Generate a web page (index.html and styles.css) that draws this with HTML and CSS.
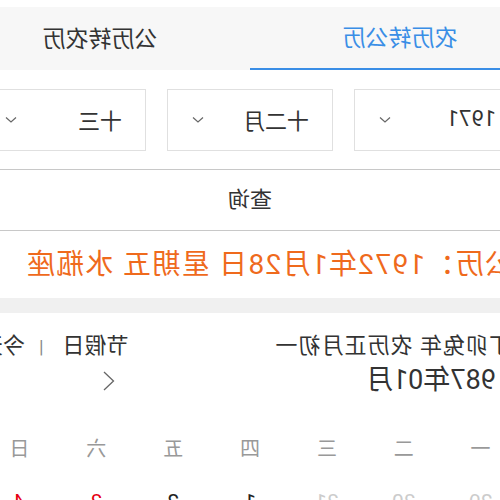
FILE: index.html
```html
<!DOCTYPE html>
<html lang="zh-CN">
<head>
  <meta charset="UTF-8">
  <meta name="viewport" content="width=device-width, initial-scale=1.0">
  <title>农历转公历</title>
  <link rel="stylesheet" href="styles.css">
</head>
<body>
  <div class="page">
    <!-- 切换 -->
    <div class="tabs">
      <div class="tab active">农历转公历</div>
      <div class="tab">公历转农历</div>
    </div>

    <!-- 选择 -->
    <div class="pickers">
      <div class="picker">
        <span>1971</span>
        <svg class="caret" width="12" height="8" viewBox="0 0 12 8"><polyline points="1,1.5 6,6 11,1.5" fill="none" stroke="#666" stroke-width="1.2"/></svg>
      </div>
      <div class="picker">
        <span>十二月</span>
        <svg class="caret" width="12" height="8" viewBox="0 0 12 8"><polyline points="1,1.5 6,6 11,1.5" fill="none" stroke="#666" stroke-width="1.2"/></svg>
      </div>
      <div class="picker">
        <span>十三</span>
        <svg class="caret" width="12" height="8" viewBox="0 0 12 8"><polyline points="1,1.5 6,6 11,1.5" fill="none" stroke="#666" stroke-width="1.2"/></svg>
      </div>
    </div>

    <div class="query">查询</div>

    <div class="result">公历：1972年1月28日 星期五 水瓶座</div>

    <div class="divider"></div>

    <!-- 日历 -->
    <div class="calendar">
      <div class="cal-head">
        <div class="cal-info">
          <div class="lunar">丁卯兔年 农历正月初一</div>
          <div class="month">1987年01月</div>
        </div>
        <div class="cal-nav">
          <div class="links">节假日<span class="sep">|</span>今天</div>
          <div class="arrows">
            <svg width="12" height="20" viewBox="0 0 12 20"><polyline points="11,1 1.5,10 11,19" fill="none" stroke="#666" stroke-width="1.3"/></svg>
            <svg width="12" height="20" viewBox="0 0 12 20"><polyline points="1,1 10.5,10 1,19" fill="none" stroke="#bbb" stroke-width="1.3"/></svg>
          </div>
        </div>
      </div>
      <div class="grid weekdays">
        <div>一</div><div>二</div><div>三</div><div>四</div><div>五</div><div>六</div><div>日</div>
      </div>
      <div class="grid days">
        <div class="other">29</div><div class="other">30</div><div class="other">31</div>
        <div>1</div><div>2</div><div class="weekend">3</div><div class="weekend">4</div>
      </div>
    </div>
  </div>
</body>
</html>
```

FILE: styles.css
```css
body {
  margin: 0;
  padding: 0;
  background: #fff;
  overflow: hidden;
  font-family: Roboto, "Noto Sans CJK SC", sans-serif;
  color: #333;
}

.page {
  width: 600px;
  margin-left: -50px;
  padding-top: 7px;
  transform: scaleX(-1);
  transform-origin: center top;
}

.tabs {
  display: flex;
  background: #f7f7f7;
  height: 63px;
}

.tab {
  flex: 1;
  display: flex;
  align-items: center;
  justify-content: center;
  padding-bottom: 4px;
  font-size: 23px;
  color: #333;
  box-sizing: border-box;
}

.tab.active {
  color: #3a8ee6;
  border-bottom: 2px solid #3a8ee6;
}

.pickers {
  display: flex;
  gap: 21px;
  padding: 0 30px;
  margin-top: 19px;
}

.picker {
  flex: 1;
  height: 62px;
  box-sizing: border-box;
  border: 1px solid #e0e0e0;
  display: flex;
  align-items: center;
  justify-content: space-between;
  padding: 0 24px 3px 23px;
  font-size: 22px;
}

.picker .caret {
  margin-top: 3px;
}

.query {
  margin: 18px 30px 0;
  height: 62px;
  box-sizing: border-box;
  border-top: 1px solid #c8c8c8;
  border-bottom: 1px solid #c8c8c8;
  display: flex;
  align-items: center;
  justify-content: center;
  padding-bottom: 6px;
  font-size: 22px;
}

.result {
  height: 67px;
  display: flex;
  align-items: center;
  padding: 0 0 6px 37px;
  box-sizing: border-box;
  font-size: 28px;
  letter-spacing: 1.3px;
  color: #ef6a1c;
  white-space: nowrap;
}

.divider {
  height: 15px;
  background: #f0f0f0;
}

.calendar {
  padding: 17px 31px 0;
}

.cal-head {
  display: flex;
  justify-content: space-between;
  padding: 0 0 0 8px;
}

.lunar {
  font-size: 22px;
  line-height: 32px;
  letter-spacing: 1px;
}

.month {
  font-size: 27px;
  line-height: 36px;
}

.cal-nav {
  display: flex;
  flex-direction: column;
  align-items: flex-end;
}

.links {
  font-size: 22px;
  line-height: 32px;
}

.sep {
  color: #888;
  margin: 0 14px 0 19px;
  font-size: 18px;
}

.arrows {
  display: flex;
  gap: 104px;
  height: 36px;
  align-items: center;
  padding-right: 6px;
}

.grid {
  display: grid;
  grid-template-columns: repeat(7, 1fr);
  text-align: center;
}

.weekdays {
  margin-top: 30px;
  font-size: 20px;
  line-height: 40px;
  color: #999;
}

.days {
  font-size: 21px;
  line-height: 66px;
  color: #222;
}

.days .other {
  color: #ccc;
}

.days .weekend {
  color: #e60012;
}
```
